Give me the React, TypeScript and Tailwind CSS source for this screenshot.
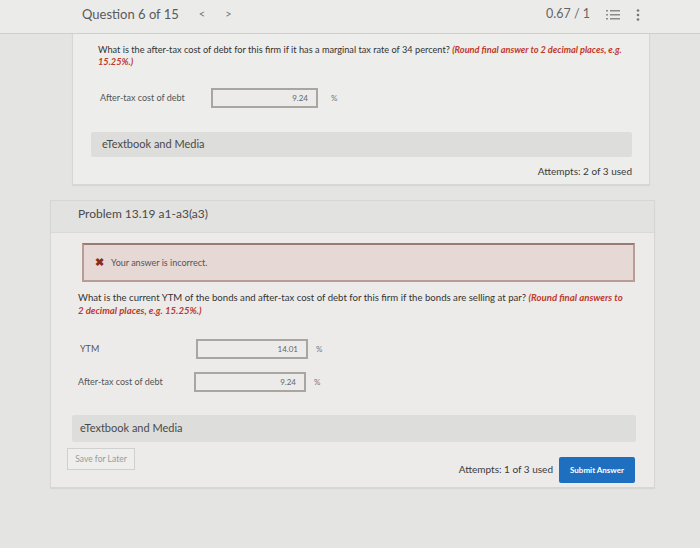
import React from "react";

const font = { fontFamily: "Lato, 'Open Sans', 'Noto Sans', sans-serif" };

function Input({ value, w }: { value: string; w: string }) {
  return (
    <div className={`h-[20px] ${w} border-2 border-[#a9a6a2] bg-[#ecebe9] flex items-center justify-end pr-[8px] text-[8px] text-[#666]`}>
      {value}
    </div>
  );
}

export default function App() {
  return (
    <div style={font} className="w-[700px] h-[548px] overflow-hidden bg-[#e4e4e2] text-[#444]">
      {/* header */}
      <div className="h-[34px] bg-[#ebebea] border-b border-[#cfcfcd] flex items-center pl-[82px] pr-[60px] pb-[4px]">
        <span className="text-[13px] text-[#5a5a5a]">Question 6 of 15</span>
        <span className="ml-[20px] text-[11px] text-[#777]">&lt;</span>
        <span className="ml-[20px] text-[11px] text-[#777]">&gt;</span>
        <div className="flex-1" />
        <span className="text-[12.5px] text-[#666]">0.67 / 1</span>
        <svg className="ml-[16px]" width="14" height="12" viewBox="0 0 14 12">
          <g fill="#8a8a8a">
            <rect x="0" y="1" width="2" height="1.5" />
            <rect x="0" y="5" width="2" height="1.5" />
            <rect x="0" y="9" width="2" height="1.5" />
            <rect x="4" y="1" width="10" height="1.5" />
            <rect x="4" y="5" width="10" height="1.5" />
            <rect x="4" y="9" width="10" height="1.5" />
          </g>
        </svg>
        <svg className="ml-[16px]" width="4" height="12" viewBox="0 0 4 12">
          <g fill="#777">
            <circle cx="2" cy="1.5" r="1.3" />
            <circle cx="2" cy="6" r="1.3" />
            <circle cx="2" cy="10.5" r="1.3" />
          </g>
        </svg>
      </div>

      {/* first card */}
      <div className="ml-[72px] w-[578px] h-[151px] bg-[#ededeb] border-x border-b border-[#d6d6d4] shadow-[0_1px_1px_rgba(0,0,0,0.06)] pl-[25px] pr-[17px] pt-[10px]">
        <div className="text-[9.2px] leading-[12px] text-[#333]">
          <div className="whitespace-nowrap">
            <span>What is the after-tax cost of debt for this firm if it has a marginal tax rate of 34 percent? </span>
            <span className="font-bold italic text-[#c0392b]">(Round final answer to 2 decimal places, e.g.</span>
          </div>
          <div className="font-bold italic text-[#c0392b]">15.25%.)</div>
        </div>
        <div className="mt-[20px] flex items-center">
          <span className="w-[113px] pl-[2px] text-[9px] text-[#555]">After-tax cost of debt</span>
          <Input value="9.24" w="w-[107px]" />
          <span className="ml-[13px] text-[8px] text-[#777]">%</span>
        </div>
        <div className="mt-[24px] -ml-[7px] h-[25px] bg-[#dddddb] rounded-[2px] flex items-center pl-[11px] text-[11px] text-[#4a4a4a]">
          eTextbook and Media
        </div>
        <div className="mt-[7px] text-right text-[10px] text-[#3a3a3a]">Attempts: 2 of 3 used</div>
      </div>

      {/* second card */}
      <div className="mt-[15px] ml-[50px] w-[605px] h-[288px] bg-[#ecebea] border border-[#d6d6d4] shadow-[0_1px_1px_rgba(0,0,0,0.06)]">
        <div className="h-[32px] bg-[#e2e2e0] border-b border-[#d9d9d7] flex items-center pl-[27px] pb-[5px] text-[12px] text-[#4a4a4a]">
          Problem 13.19 a1-a3(a3)
        </div>
        <div className="pl-[27px] pr-[20px]">
          <div className="mt-[10px] ml-[4px] w-[553px] h-[39px] bg-[#e6d8d4] border-2 border-[#b99c98] border-t-[#9c7a74] flex items-center pl-[11px]">
            <span className="text-[11px] font-bold text-[#8a2a20]">✖</span>
            <span className="ml-[7px] text-[9px] text-[#555]">Your answer is incorrect.</span>
          </div>
          <div className="mt-[9px] text-[9.6px] leading-[13px] text-[#333]">
            <div className="whitespace-nowrap">
              <span>What is the current YTM of the bonds and after-tax cost of debt for this firm if the bonds are selling at par? </span>
              <span className="font-bold italic text-[#c0392b]">(Round final answers to</span>
            </div>
            <div className="font-bold italic text-[#c0392b]">2 decimal places, e.g. 15.25%.)</div>
          </div>
          <div className="mt-[22px] flex items-center">
            <span className="w-[118px] pl-[2px] text-[9px] text-[#555]">YTM</span>
            <Input value="14.01" w="w-[112px]" />
            <span className="ml-[8px] text-[8px] text-[#777]">%</span>
          </div>
          <div className="mt-[13px] flex items-center">
            <span className="w-[116px] text-[9px] text-[#555]">After-tax cost of debt</span>
            <Input value="9.24" w="w-[112px]" />
            <span className="ml-[8px] text-[8px] text-[#777]">%</span>
          </div>
          <div className="mt-[23px] -ml-[6px] w-[564px] h-[27px] bg-[#dddddb] rounded-[2px] flex items-center pl-[8px] text-[11px] text-[#4a4a4a]">
            eTextbook and Media
          </div>
          <div className="mt-[6px] -ml-[11px] w-[568px] flex items-start">
            <div className="h-[22px] w-[68px] border border-[#d0d0ce] bg-[#eeeeec] flex items-center justify-center text-[8.5px] text-[#9a9a9a]">
              Save for Later
            </div>
            <div className="flex-1" />
            <span className="mt-[14px] text-[10px] text-[#3a3a3a]">Attempts: 1 of 3 used</span>
            <div className="ml-[6px] mt-[9px] h-[26px] w-[76px] bg-[#1f6fc0] rounded-[2px] flex items-center justify-center text-[8px] font-bold text-white">
              Submit Answer
            </div>
          </div>
        </div>
      </div>
    </div>
  );
}
